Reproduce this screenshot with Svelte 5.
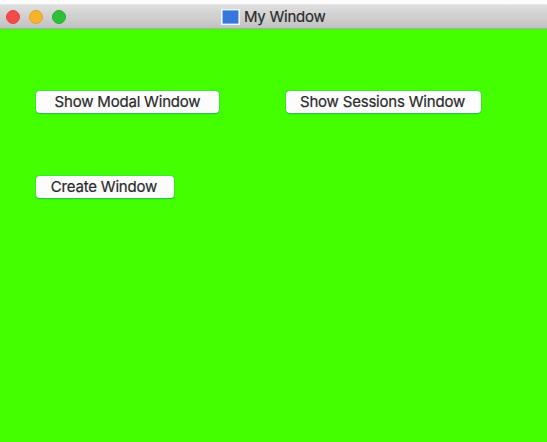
<script>
  const rows = [
    [
      { label: 'Show Modal Window', kind: 'modal' },
      { label: 'Show Sessions Window', kind: 'sessions' },
    ],
    [{ label: 'Create Window', kind: 'create' }],
  ];
</script>

<div class="screen">
  <div class="window">
    <header>
      <div class="lights">
        <i class="close"></i>
        <i class="minimise"></i>
        <i class="zoom"></i>
      </div>
      <div class="title">
        <svg width="19" height="16" viewBox="0 0 19 16">
          <rect width="19" height="16" fill="#f0f5fa" />
          <rect x="1.6" y="1.4" width="15.8" height="13.2" fill="#3677dc" />
        </svg>
        <span>My Window</span>
      </div>
    </header>
    <main>
      {#each rows as row}
        <div class="row">
          {#each row as button}
            <button class={button.kind}>{button.label}</button>
          {/each}
        </div>
      {/each}
    </main>
  </div>
</div>

<style>
  :global(body) {
    margin: 0;
    overflow: hidden;
  }
  .screen {
    box-sizing: border-box;
    height: 442px;
    padding-top: 4px;
    background: #fafafa;
    font-family: Inter, Roboto, 'Liberation Sans', sans-serif;
    color: #2a2a2a;
    -webkit-text-stroke: 0.2px #2a2a2a;
  }
  .window {
    display: flex;
    flex-direction: column;
    height: 438px;
  }
  header {
    box-sizing: border-box;
    display: flex;
    align-items: center;
    height: 25px;
    border-top: 1px solid #e8e8e8;
    border-bottom: 1px solid #acaaae;
    background: linear-gradient(#dedede, #c2c2c2);
  }
  .lights {
    display: flex;
    gap: 9px;
    width: 215px;
    padding-left: 6px;
  }
  .lights i {
    box-sizing: border-box;
    width: 14px;
    height: 14px;
    border-radius: 50%;
  }
  .close {
    background: #f64a4a;
    border: 1px solid #e54343;
  }
  .minimise {
    background: #f7b32b;
    border: 1px solid #e6a126;
  }
  .zoom {
    background: #2fc038;
    border: 1px solid #28ae30;
  }
  .title {
    display: flex;
    align-items: center;
    gap: 4px;
    font-size: 15px;
    letter-spacing: -0.25px;
    line-height: 22px;
    white-space: nowrap;
  }
  .title span {
    padding-top: 1px;
  }
  main {
    flex: 1;
    display: flex;
    flex-direction: column;
    gap: 63px;
    padding: 62px 0 0 36px;
    background: #43ff00;
  }
  .row {
    display: flex;
    gap: 67px;
  }
  button {
    height: 22px;
    padding: 0;
    border: 0;
    border-radius: 4px;
    background: #fcfcfc;
    box-shadow: 0 0 0 0.5px #35d65c, 0 0.5px 1px #16a54a;
    font: inherit;
    font-size: 15px;
    letter-spacing: -0.2px;
    line-height: 20px;
    color: inherit;
    white-space: nowrap;
  }
  .modal {
    width: 183px;
  }
  .sessions {
    width: 195px;
    padding-right: 2px;
  }
  .create {
    width: 138px;
    padding-right: 2px;
  }
</style>
